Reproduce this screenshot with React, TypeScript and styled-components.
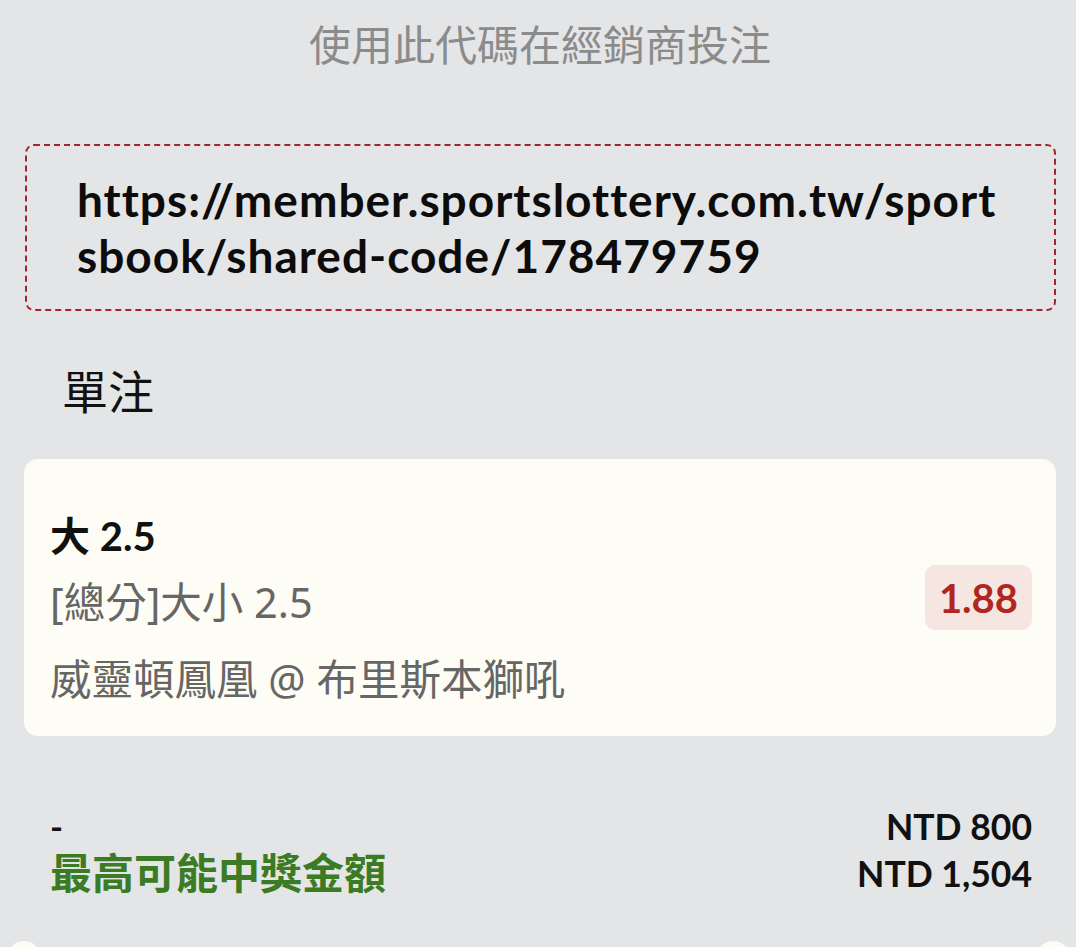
import React from "react";
import styled, { createGlobalStyle } from "styled-components";

const GlobalStyle = createGlobalStyle`
  html, body {
    margin: 0;
    padding: 0;
    background: #e4e5e7;
  }
  body {
    font-family: "Lato", "Noto Sans CJK TC", sans-serif;
    color: #111;
  }
`;

export default function App() {
  const bet = {
    selection: "大 2.5",
    market: "[總分]大小 2.5",
    match: "威靈頓鳳凰 @ 布里斯本獅吼",
    odds: "1.88",
  };

  return (
    <Page>
      <GlobalStyle />
      <Title>使用此代碼在經銷商投注</Title>
      <CodeBox>https://member.sportslottery.com.tw/sportsbook/shared-code/178479759</CodeBox>
      <SectionLabel>單注</SectionLabel>
      <BetCard>
        <BetInfo>
          <Selection>{bet.selection}</Selection>
          <Meta>{bet.market}</Meta>
          <Meta $gap={11}>{bet.match}</Meta>
        </BetInfo>
        <Odds>{bet.odds}</Odds>
      </BetCard>
      <Summary>
        <SummaryLabel>-</SummaryLabel>
        <SummaryValue>NTD 800</SummaryValue>
        <SummaryLabel $green>最高可能中獎金額</SummaryLabel>
        <SummaryValue>NTD 1,504</SummaryValue>
      </Summary>
      <Notches>
        <Notch />
        <Notch />
      </Notches>
    </Page>
  );
}

const Page = styled.div`
  padding: 0 20px 0 24px;
  display: flex;
  flex-direction: column;
`;

const Title = styled.div`
  padding-top: 17px;
  text-align: center;
  font-size: 42px;
  line-height: 56px;
  color: #8b8b8b;
`;

const CodeBox = styled.div`
  margin-top: 71px;
  margin-left: 1px;
  border: 2px dashed #a3262f;
  border-radius: 9px;
  padding: 26px 48px 25px 50px;
  font-size: 46px;
  letter-spacing: 1px;
  line-height: 56px;
  font-weight: 700;
  word-break: break-all;
  color: #0c0c0c;
`;

const SectionLabel = styled.div`
  margin-top: 51px;
  margin-left: 38px;
  font-size: 46px;
  line-height: 60px;
  color: #111;
`;

const BetCard = styled.div`
  margin-top: 37px;
  background: #fefdf5;
  border-radius: 14px;
  padding: 24px 24px 24px 26px;
  display: flex;
  align-items: center;
  justify-content: space-between;
`;

const BetInfo = styled.div`
  padding-top: 28px;
  display: flex;
  flex-direction: column;
`;

const Selection = styled.div`
  font-size: 40px;
  line-height: 50px;
  font-weight: 700;
  color: #111;
`;

const Meta = styled.div<{ $gap?: number }>`
  margin-top: ${({ $gap = 8 }) => $gap}px;
  font-family: "Noto Sans", "Noto Sans CJK TC", sans-serif;
  font-size: 41.5px;
  line-height: 66px;
  color: #666;
`;

const Odds = styled.div`
  background: #f6e6e2;
  border-radius: 10px;
  padding: 0 14px;
  height: 65px;
  display: flex;
  align-items: center;
  font-size: 40px;
  font-weight: 700;
  color: #b1261f;
`;

const Summary = styled.div`
  margin-top: 67px;
  padding: 0 24px 0 26px;
  display: grid;
  grid-template-columns: 1fr auto;
  grid-auto-rows: 47px;
  align-items: center;
`;

const SummaryLabel = styled.div<{ $green?: boolean }>`
  font-size: ${({ $green }) => ($green ? "42px" : "35px")};
  font-weight: 700;
  line-height: 47px;
  color: ${({ $green }) => ($green ? "#3b7b24" : "#111")};
`;

const SummaryValue = styled.div`
  text-align: right;
  font-size: 35.5px;
  font-weight: 700;
  line-height: 47px;
  color: #111;
`;

const Notches = styled.div`
  margin-top: 44px;
  margin-left: -17px;
  margin-right: -14px;
  display: flex;
  justify-content: space-between;
`;

const Notch = styled.div`
  width: 34px;
  height: 34px;
  border-radius: 50%;
  background: #fefdf5;
`;
